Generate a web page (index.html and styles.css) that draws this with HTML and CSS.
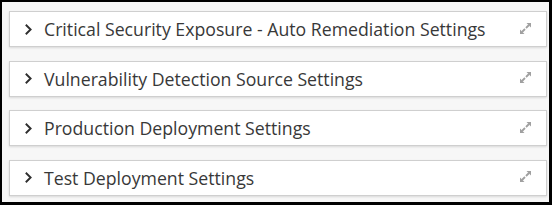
FILE: index.html
```html
<!DOCTYPE html>
<html>
<head>
<meta charset="utf-8">
<link rel="stylesheet" href="styles.css">
</head>
<body>
<div class="frame">
  <div class="panel">
    <span class="chev"><svg width="9" height="13" viewBox="0 0 9 13"><path d="M1.8 1.8 L6.6 6.5 L1.8 11.2" fill="none" stroke="#2e2e2e" stroke-width="1.9"/></svg></span>
    <span class="title">Critical Security Exposure - Auto Remediation Settings</span>
    <span class="expand"><svg width="13" height="13" viewBox="0 0 13 13"><path d="M7.5 1 H12 V5.5 Z M1 7.5 V12 H5.5 Z" fill="#a0a0a0"/><path d="M10 3 L7 6 M3 10 L6 7" stroke="#a0a0a0" stroke-width="1.8"/></svg></span>
  </div>
  <div class="panel">
    <span class="chev"><svg width="9" height="13" viewBox="0 0 9 13"><path d="M1.8 1.8 L6.6 6.5 L1.8 11.2" fill="none" stroke="#2e2e2e" stroke-width="1.9"/></svg></span>
    <span class="title">Vulnerability Detection Source Settings</span>
    <span class="expand"><svg width="13" height="13" viewBox="0 0 13 13"><path d="M7.5 1 H12 V5.5 Z M1 7.5 V12 H5.5 Z" fill="#a0a0a0"/><path d="M10 3 L7 6 M3 10 L6 7" stroke="#a0a0a0" stroke-width="1.8"/></svg></span>
  </div>
  <div class="panel">
    <span class="chev"><svg width="9" height="13" viewBox="0 0 9 13"><path d="M1.8 1.8 L6.6 6.5 L1.8 11.2" fill="none" stroke="#2e2e2e" stroke-width="1.9"/></svg></span>
    <span class="title">Production Deployment Settings</span>
    <span class="expand"><svg width="13" height="13" viewBox="0 0 13 13"><path d="M7.5 1 H12 V5.5 Z M1 7.5 V12 H5.5 Z" fill="#a0a0a0"/><path d="M10 3 L7 6 M3 10 L6 7" stroke="#a0a0a0" stroke-width="1.8"/></svg></span>
  </div>
  <div class="panel">
    <span class="chev"><svg width="9" height="13" viewBox="0 0 9 13"><path d="M1.8 1.8 L6.6 6.5 L1.8 11.2" fill="none" stroke="#2e2e2e" stroke-width="1.9"/></svg></span>
    <span class="title">Test Deployment Settings</span>
    <span class="expand"><svg width="13" height="13" viewBox="0 0 13 13"><path d="M7.5 1 H12 V5.5 Z M1 7.5 V12 H5.5 Z" fill="#a0a0a0"/><path d="M10 3 L7 6 M3 10 L6 7" stroke="#a0a0a0" stroke-width="1.8"/></svg></span>
  </div>
</div>
</body>
</html>
```
FILE: styles.css
```css
html, body {
  margin: 0;
  padding: 0;
}
.frame {
  box-sizing: border-box;
  width: 552px;
  height: 205px;
  border-style: solid;
  border-color: #000;
  border-width: 2px 3px 3px 2px;
  background: #f7f7f7;
  padding: 9px 2px 0 7px;
  display: flex;
  flex-direction: column;
  gap: 13.5px;
  font-family: "Open Sans", "Liberation Sans", sans-serif;
}
.panel {
  box-sizing: border-box;
  height: 36px;
  background: #fff;
  border: 1px solid #cfcfcf;
  box-shadow: 0 1px 2px rgba(0,0,0,0.12);
  display: flex;
  align-items: center;
  padding: 0 14px 0 14px;
}
.chev {
  display: flex;
  width: 9px;
  margin-right: 11px;
}
.title {
  flex: 1;
  font-size: 17.7px;
  color: #383838;
  white-space: nowrap;
  line-height: 20px;
}
.expand {
  display: flex;
  margin-top: -2px;
}
```
